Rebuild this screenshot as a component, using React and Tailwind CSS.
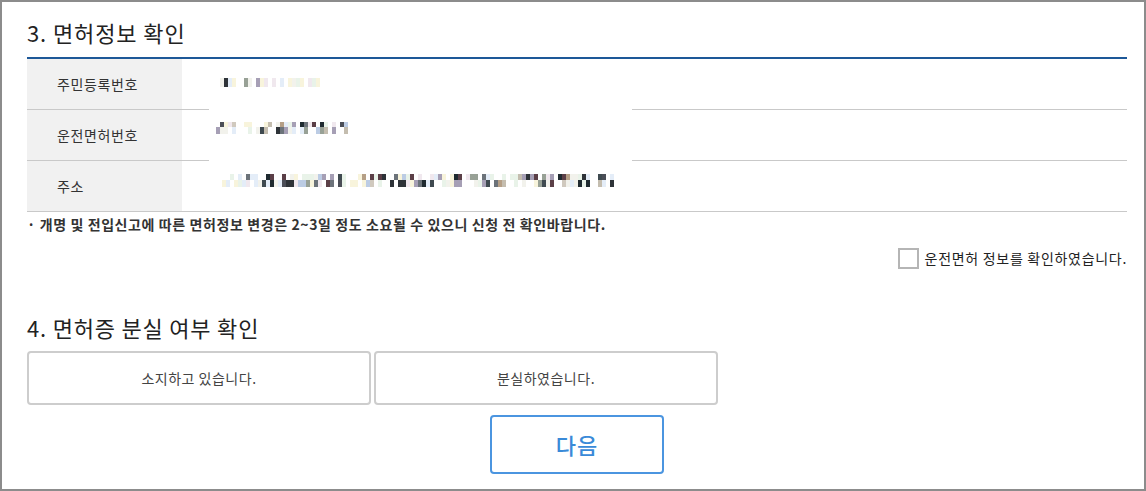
const LIGHT = ['#f2f2ec', '#f8f4dc', '#e4edf8', '#f0e8ee', '#e9f3e9']
const MID = ['#d0c9be', '#bccce4', '#b59f86', '#a69fb5', '#98a196', '#c4bdaf']
const DARK = ['#6c737a', '#4b4e57', '#2e3338', '#5b3f47', '#3f4a50', '#1f2a30']

function rng(seed) {
  let s = seed
  return () => {
    s = (s * 16807) % 2147483647
    return s / 2147483647
  }
}

// masked (mosaic) values: each line is a strip of 4px blocks
const strips = [
  { seed: 11, x: 7, y: 18, hs: [9], count: 26, darkUntil: 12 },
  { seed: 29, x: 7, y: 62, hs: [5, 7], count: 33, darkUntil: 33 },
  { seed: 53, x: 9, y: 114, hs: [6, 7], count: 99, darkUntil: 99 },
]

function buildRects() {
  const out = []
  strips.forEach((st) => {
    const r = rng(st.seed)
    let yy = st.y
    st.hs.forEach((h) => {
      for (let i = 0; i < st.count; i++) {
        const v = r()
        const k = r()
        let c = null
        if (v < 0.3) c = null
        else if (v < 0.58 || i >= st.darkUntil) c = LIGHT[Math.floor(k * LIGHT.length)]
        else if (v < 0.8) c = MID[Math.floor(k * MID.length)]
        else c = DARK[Math.floor(k * DARK.length)]
        if (c) out.push({ x: st.x + i * 4, y: yy, h, c })
      }
      yy += h
    })
  })
  return out
}

function MaskedValues() {
  const rects = buildRects()
  return (
    <svg width="423" height="149" className="block">
      {rects.map((r, i) => (
        <rect key={i} x={r.x} y={r.y} width="4" height={r.h} fill={r.c} />
      ))}
    </svg>
  )
}

const rows = ['주민등록번호', '운전면허번호', '주소']

export default function App() {
  return (
    <div
      className="w-[1146px] h-[491px] border-2 border-[#8c8c8c] bg-white pl-[25px] text-[#222]"
      style={{ fontFamily: '"Noto Sans CJK KR", "Noto Sans", sans-serif' }}
    >
      <div className="w-[1100px]">
        <h2 className="pt-[16px] pb-[11px] text-[22px] leading-[28px] tracking-[0.9px] font-normal">3. 면허정보 확인</h2>

        <div className="relative border-t-2 border-[#1d5898]">
          {rows.map((label) => (
            <div key={label} className="flex h-[51px] border-b border-[#c9c9c9]">
              <div className="w-[155px] bg-[#f1f1f1] pl-[30px] flex items-center text-[14px] tracking-[0.6px] text-[#333]">
                {label}
              </div>
              <div className="flex-1" />
            </div>
          ))}
          <div className="absolute left-[182px] top-[1px] w-[423px] h-[149px] bg-white">
            <MaskedValues />
          </div>
        </div>

        <p className="mt-[3px] text-[14px] leading-[18px] tracking-[0.6px] font-bold text-[#333]">
          · 개명 및 전입신고에 따른 면허정보 변경은 2~3일 정도 소요될 수 있으니 신청 전 확인바랍니다.
        </p>

        <label className="mt-[15px] flex items-center justify-end gap-[6px] h-[21px]">
          <span className="w-[21px] h-[21px] border-2 border-[#b5b5b5] bg-white" />
          <span className="text-[14px] tracking-[0.7px] text-[#222]">운전면허 정보를 확인하였습니다.</span>
        </label>

        <h2 className="mt-[44px] text-[22px] leading-[28px] tracking-[0.8px] font-normal">4. 면허증 분실 여부 확인</h2>

        <div className="mt-[10px] flex gap-[3px]">
          <button className="w-[344px] h-[54px] rounded-[4px] border-2 border-[#cdcdcd] bg-white text-[14px] tracking-[0.5px] text-[#444]">
            소지하고 있습니다.
          </button>
          <button className="w-[344px] h-[54px] rounded-[4px] border-2 border-[#cdcdcd] bg-white text-[14px] tracking-[0.5px] text-[#444]">
            분실하였습니다.
          </button>
        </div>

        <div className="mt-[10px] flex justify-center">
          <button className="w-[174px] h-[59px] rounded-[4px] border-2 border-[#4b95e0] bg-white text-[22px] tracking-[1px] font-medium text-[#3a8ad8]">
            다음
          </button>
        </div>
      </div>
    </div>
  )
}
